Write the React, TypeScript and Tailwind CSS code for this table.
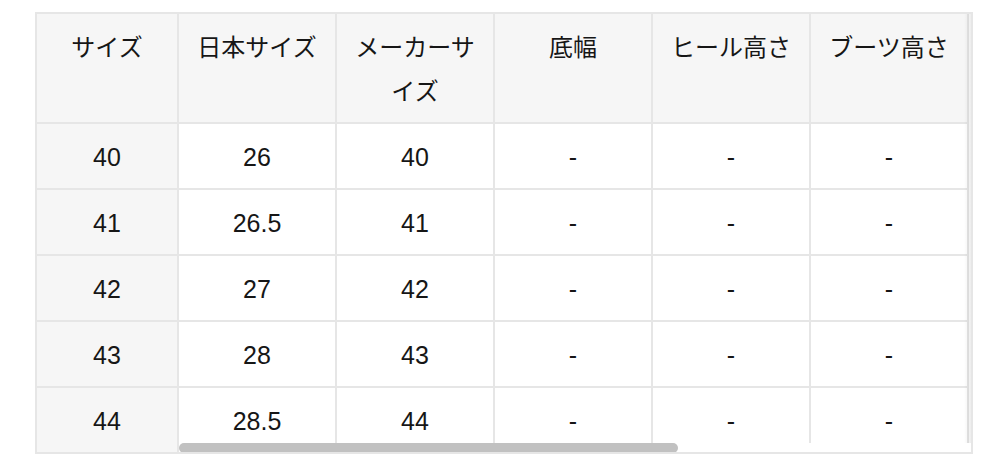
const headers = ["サイズ", "日本サイズ", "メーカーサイズ", "底幅", "ヒール高さ", "ブーツ高さ"];

const rows = [
  ["40", "26", "40", "-", "-", "-"],
  ["41", "26.5", "41", "-", "-", "-"],
  ["42", "27", "42", "-", "-", "-"],
  ["43", "28", "43", "-", "-", "-"],
  ["44", "28.5", "44", "-", "-", "-"],
];

export default function App() {
  return (
    <div
      className="w-[984px] h-[472px] bg-white pl-[35px] pt-[12px] text-[#161616]"
      style={{ fontFamily: '"Liberation Sans", "Noto Sans CJK JP", sans-serif' }}
    >
      <div className="relative w-[938px] h-[442px] border-2 border-[#e6e6e6] overflow-hidden bg-white">
        <div className="grid grid-cols-[142px_repeat(5,158px)] grid-rows-[110px_repeat(4,66px)_64px] w-max">
          {/* header row */}
          {headers.map((h) => (
            <div
              key={h}
              className="bg-[#f6f6f6] border-r-2 border-b-2 border-[#e6e6e6] px-3 pt-3 text-center text-[24px] leading-[44px]"
            >
              {h}
            </div>
          ))}

          {/* body rows */}
          {rows.map((r, ri) =>
            r.map((c, ci) => (
              <div
                key={ri + "-" + ci}
                className={
                  "flex items-center justify-center pt-1 border-r-2 border-[#e6e6e6] text-[25px]" +
                  (ri < rows.length - 1 ? " border-b-2" : "") +
                  (ci === 0 ? " bg-[#f6f6f6]" : " bg-white")
                }
              >
                {c}
              </div>
            ))
          )}
        </div>

        {/* right scroll shadow */}
        <div className="absolute right-0 top-0 bottom-[9px] w-[7px] bg-gradient-to-r from-transparent to-black/[0.07]" />

        {/* horizontal scrollbar */}
        <div className="absolute left-[142px] right-0 bottom-0 h-[9px] bg-white">
          <div className="w-[499px] h-[10px] rounded-full bg-[#c1c1c1]" />
        </div>
      </div>
    </div>
  );
}
